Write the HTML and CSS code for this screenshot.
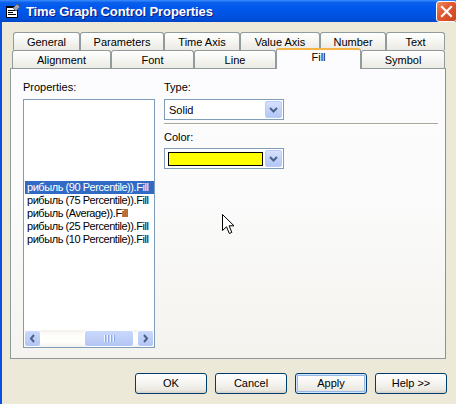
FILE: index.html
```html
<!DOCTYPE html>
<html>
<head>
<meta charset="utf-8">
<link rel="stylesheet" href="styles.css">
</head>
<body>
<div class="window">
  <div class="titlebar">
    <svg class="ticon" width="16" height="16" viewBox="0 0 16 16">
      <rect x="1.5" y="3.5" width="11" height="11" fill="#fff" stroke="#000"/>
      <rect x="1" y="3" width="12" height="2" fill="#000"/>
      <line x1="3" y1="7.5" x2="11" y2="7.5" stroke="#000"/>
      <line x1="3" y1="9.5" x2="8" y2="9.5" stroke="#000"/>
      <line x1="3" y1="11.5" x2="11" y2="11.5" stroke="#000"/>
      <path d="M8 5 L12 1 L15 2 L15 4 L11 8 Z" fill="#9AA3B5" stroke="#4A5060" stroke-width="0.8"/>
      <path d="M12 1 L15 2 L15 4" fill="#2A3BB0"/>
    </svg>
    <span class="title">Time Graph Control Properties</span>
    <div class="close">
      <svg width="19" height="19" viewBox="0 0 19 19"><path d="M5 5 L14 14 M14 5 L5 14" stroke="#fff" stroke-width="2.2" stroke-linecap="square"/></svg>
    </div>
  </div>
  <div class="content">
    <div class="tabrow row1">
      <div class="tab w-general">General</div>
      <div class="tab w-params">Parameters</div>
      <div class="tab w-time">Time Axis</div>
      <div class="tab w-value">Value Axis</div>
      <div class="tab w-number">Number</div>
      <div class="tab w-text">Text</div>
    </div>
    <div class="tabrow row2">
      <div class="tab w-align">Alignment</div>
      <div class="tab w-font">Font</div>
      <div class="tab w-line">Line</div>
      <div class="tab w-fill active">Fill</div>
      <div class="tab w-symbol">Symbol</div>
    </div>
    <div class="page">
      <div class="leftcol">
        <div class="label">Properties:</div>
        <div class="listbox">
          <div class="items">
            <div class="item selected">рибыль (90 Percentile)).Fill</div>
            <div class="item">рибыль (75 Percentile)).Fill</div>
            <div class="item">рибыль (Average)).Fill</div>
            <div class="item">рибыль (25 Percentile)).Fill</div>
            <div class="item">рибыль (10 Percentile)).Fill</div>
          </div>
          <div class="hscroll">
            <div class="sbtn">
              <svg width="15" height="15" viewBox="0 0 15 15"><path d="M9 4 L6 7.5 L9 11" fill="none" stroke="#4D6185" stroke-width="2"/></svg>
            </div>
            <div class="track"></div>
            <div class="thumb">
              <span class="grip"></span><span class="grip"></span><span class="grip"></span><span class="grip"></span>
            </div>
            <div class="track-end"></div>
            <div class="sbtn">
              <svg width="15" height="15" viewBox="0 0 15 15"><path d="M6 4 L9 7.5 L6 11" fill="none" stroke="#4D6185" stroke-width="2"/></svg>
            </div>
          </div>
        </div>
      </div>
      <div class="rightcol">
        <div class="label">Type:</div>
        <div class="combo">
          <span class="ctext">Solid</span>
          <div class="dbtn">
            <svg width="9" height="6" viewBox="0 0 9 6"><path d="M1 1 L4.5 4.5 L8 1" fill="none" stroke="#4D6185" stroke-width="2"/></svg>
          </div>
        </div>
        <div class="sep"></div>
        <div class="label label-color">Color:</div>
        <div class="combo">
          <span class="swatch"></span>
          <div class="dbtn">
            <svg width="9" height="6" viewBox="0 0 9 6"><path d="M1 1 L4.5 4.5 L8 1" fill="none" stroke="#4D6185" stroke-width="2"/></svg>
          </div>
        </div>
      </div>
    </div>
    <div class="buttons">
      <div class="btn">OK</div>
      <div class="btn">Cancel</div>
      <div class="btn default">Apply</div>
      <div class="btn">Help &gt;&gt;</div>
    </div>
  </div>
  <svg class="cursor" width="14" height="22" viewBox="0 0 14 22">
    <path d="M0.5 0.5 L0.5 16.5 L4.5 12.8 L7.3 19.5 L9.8 18.4 L7.1 11.8 L12 11.8 Z" fill="#fff" stroke="#000" stroke-width="1"/>
  </svg>
</div>
</body>
</html>
```
FILE: styles.css
```css
html, body {
  margin: 0;
  padding: 0;
}
body {
  width: 456px;
  height: 404px;
  overflow: hidden;
  font-family: "Liberation Sans", Arial, sans-serif;
  font-size: 11px;
  color: #000;
}
.window {
  position: relative;
  width: 456px;
  height: 404px;
  background: #ECE9D8;
  overflow: hidden;
}
.titlebar {
  height: 22px;
  display: flex;
  align-items: center;
  padding-left: 5px;
  background: linear-gradient(to bottom, #3A8CFF 0%, #0A5FEA 12%, #0058EE 30%, #0055E5 60%, #004FD9 85%, #0046C8 100%);
  position: relative;
}
.ticon {
  flex: none;
  margin-right: 5px;
}
.title {
  color: #fff;
  font-family: "Liberation Sans", Arial, sans-serif;
  font-weight: bold;
  font-size: 13px;
  letter-spacing: -0.1px;
  text-shadow: 1px 1px 0 #0A1883;
  white-space: nowrap;
}
.close {
  position: absolute;
  left: 436px;
  top: 1px;
  width: 19px;
  height: 19px;
  border: 1px solid #fff;
  border-radius: 3px;
  background: linear-gradient(135deg, #F08B63 0%, #E35A32 40%, #CC4420 100%);
  display: flex;
}
.content {
  border-left: 2px solid #0A4FE0;
  height: 382px;
  padding: 10px 0 0 8px;
  box-sizing: border-box;
}
.tabrow {
  display: flex;
  height: 18px;
  align-items: flex-start;
}
.row1 { margin-left: 3px; }
.row2 { margin-left: 2px; }
.tab {
  box-sizing: border-box;
  height: 18px;
  border: 1px solid #919B9C;
  border-bottom: none;
  border-radius: 3px 3px 0 0;
  background: linear-gradient(to bottom, #FFFFFF 0%, #F7F7F4 40%, #EBEAE4 100%);
  text-align: center;
  line-height: 18px;
  white-space: nowrap;
}
.tab.active {
  height: 21px;
  margin-top: -2px;
  margin-bottom: -1px;
  position: relative;
  z-index: 2;
  background: #FCFCFE;
  border-top: 2px solid #F5B443;
  line-height: 15px;
}
.w-general { width: 67px; }
.w-params { width: 84px; }
.w-time { width: 76px; }
.w-value { width: 80px; }
.w-number { width: 66px; }
.w-text { width: 59px; }
.w-align { width: 99px; }
.w-font { width: 83px; }
.w-line { width: 82px; }
.w-fill { width: 85px; }
.w-symbol { width: 84px; }

.page {
  box-sizing: border-box;
  width: 436px;
  height: 291px;
  border: 1px solid #919B9C;
  border-right-color: #8A9293;
  background: linear-gradient(to bottom, #FCFCFE 0%, #FBFBFB 45%, #F4F3EE 100%);
  padding: 12px 0 0 12px;
  display: flex;
  position: relative;
  z-index: 1;
}
.label {
  height: 13px;
  line-height: 13px;
  white-space: nowrap;
}
.leftcol {
  width: 132px;
  display: flex;
  flex-direction: column;
}
.listbox {
  margin-top: 5px;
  box-sizing: border-box;
  width: 132px;
  height: 249px;
  border: 1px solid #7F9DB9;
  background: #fff;
  display: flex;
  flex-direction: column;
  overflow: hidden;
}
.items {
  padding-top: 81px;
}
.item {
  height: 13px;
  line-height: 13px;
  padding-left: 2px;
  margin-left: 1px;
  white-space: nowrap;
  letter-spacing: -0.45px;
}
.item.selected {
  background: #316AC5;
  color: #fff;
}
.hscroll {
  margin-top: auto;
  height: 17px;
  display: flex;
  background: linear-gradient(to bottom, #F3F1EC 0%, #FEFEFB 30%, #FEFEFB 70%, #F3F1EC 100%);
}
.sbtn {
  box-sizing: border-box;
  width: 17px;
  height: 17px;
  border: 1px solid #fff;
  border-radius: 3px;
  background: linear-gradient(to bottom, #C9D8FC 0%, #BCCDF6 60%, #B2C5F4 100%);
  display: flex;
  align-items: center;
  justify-content: center;
}
.track { flex: 1; }
.track-end { width: 3px; }
.thumb {
  box-sizing: border-box;
  width: 50px;
  height: 17px;
  border: 1px solid #fff;
  border-radius: 3px;
  background: linear-gradient(to bottom, #C9D8FC 0%, #BCCDF6 60%, #B2C5F4 100%);
  display: flex;
  align-items: center;
  justify-content: center;
  gap: 1px;
}
.grip {
  width: 1px;
  height: 7px;
  background: #EEF3FE;
  box-shadow: 1px 0 0 #8CA9EC;
  margin-right: 1px;
}
.rightcol {
  margin-left: 9px;
  width: 274px;
  display: flex;
  flex-direction: column;
}
.combo {
  margin-top: 5px;
  box-sizing: border-box;
  width: 120px;
  height: 21px;
  border: 1px solid #7F9DB9;
  background: #fff;
  display: flex;
  align-items: center;
  padding-left: 4px;
}
.label-color + .combo {
  margin-top: 4px;
  padding-left: 3px;
}
.ctext {
  flex: 1;
  white-space: nowrap;
}
.swatch {
  box-sizing: border-box;
  width: 95px;
  height: 14px;
  border: 1px solid #000;
  background: #FFFF00;
  margin-right: auto;
}
.dbtn {
  box-sizing: border-box;
  width: 17px;
  height: 17px;
  margin-right: 1px;
  border: 1px solid #BBCBF5;
  border-radius: 2px;
  background: linear-gradient(to bottom, #D6E1FD 0%, #C2D3FB 50%, #B3C7F6 100%);
  display: flex;
  align-items: center;
  justify-content: center;
}
.sep {
  margin-top: 3px;
  height: 1px;
  background: #ACA899;
  border-bottom: 1px solid #fff;
}
.label-color {
  margin-top: 6px;
}
.buttons {
  display: flex;
  justify-content: flex-end;
  gap: 8px;
  margin-top: 14px;
  padding-right: 9px;
}
.btn {
  box-sizing: border-box;
  width: 72px;
  height: 21px;
  border: 1px solid #003C74;
  border-radius: 3px;
  background: linear-gradient(to bottom, #FFFFFF 0%, #F5F4F0 50%, #EAE8E0 85%, #D6D0C5 100%);
  text-align: center;
  line-height: 19px;
  white-space: nowrap;
}
.btn.default {
  box-shadow: inset 0 0 0 1px #CEE7FF, inset 0 0 0 2px #98B8EA;
}
.cursor {
  position: absolute;
  left: 222px;
  top: 214px;
  z-index: 5;
}
```
